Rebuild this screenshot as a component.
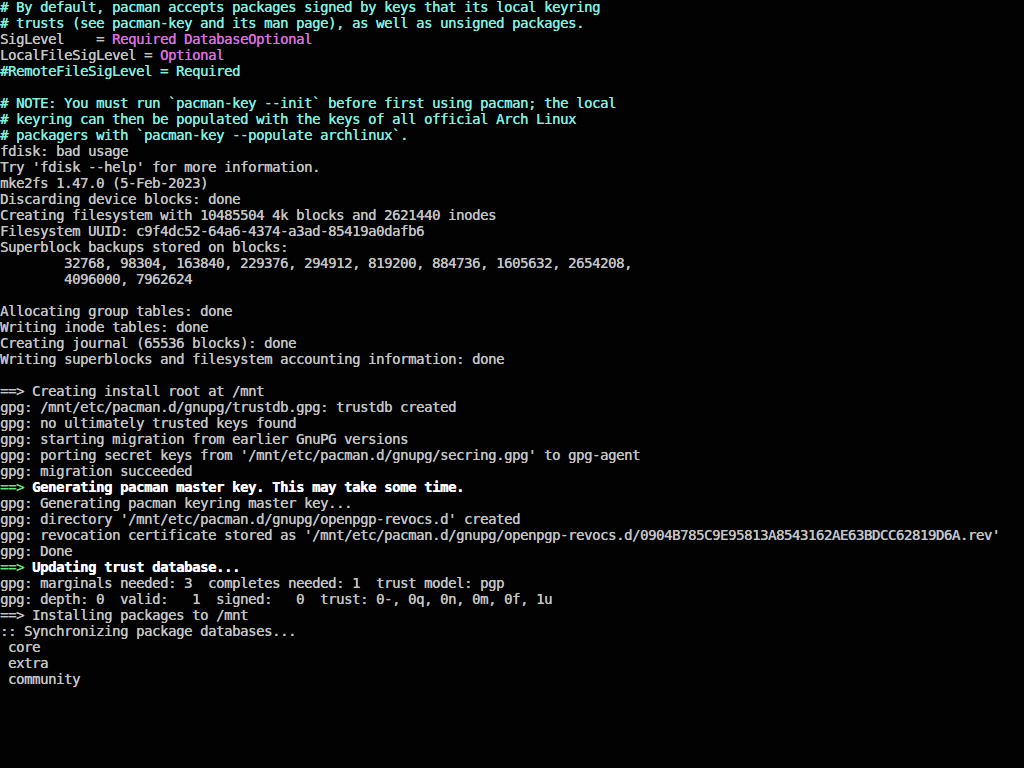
import React from "react";

const G = "text-[#c4c4c4]";
const C = "text-[#7ff0e0]";
const M = "text-[#de6ee0]";
const GR = "text-[#6fe36f]";
const W = "text-white font-bold";

const lines = [
  [[C, "# By default, pacman accepts packages signed by keys that its local keyring"]],
  [[C, "# trusts (see pacman-key and its man page), as well as unsigned packages."]],
  [[G, "SigLevel    = "], [M, "Required DatabaseOptional"]],
  [[G, "LocalFileSigLevel = "], [M, "Optional"]],
  [[C, "#RemoteFileSigLevel = Required"]],
  [],
  [[C, "# NOTE: You must run `pacman-key --init` before first using pacman; the local"]],
  [[C, "# keyring can then be populated with the keys of all official Arch Linux"]],
  [[C, "# packagers with `pacman-key --populate archlinux`."]],
  [[G, "fdisk: bad usage"]],
  [[G, "Try 'fdisk --help' for more information."]],
  [[G, "mke2fs 1.47.0 (5-Feb-2023)"]],
  [[G, "Discarding device blocks: done"]],
  [[G, "Creating filesystem with 10485504 4k blocks and 2621440 inodes"]],
  [[G, "Filesystem UUID: c9f4dc52-64a6-4374-a3ad-85419a0dafb6"]],
  [[G, "Superblock backups stored on blocks:"]],
  [[G, "        32768, 98304, 163840, 229376, 294912, 819200, 884736, 1605632, 2654208,"]],
  [[G, "        4096000, 7962624"]],
  [],
  [[G, "Allocating group tables: done"]],
  [[G, "Writing inode tables: done"]],
  [[G, "Creating journal (65536 blocks): done"]],
  [[G, "Writing superblocks and filesystem accounting information: done"]],
  [],
  [[G, "==> Creating install root at /mnt"]],
  [[G, "gpg: /mnt/etc/pacman.d/gnupg/trustdb.gpg: trustdb created"]],
  [[G, "gpg: no ultimately trusted keys found"]],
  [[G, "gpg: starting migration from earlier GnuPG versions"]],
  [[G, "gpg: porting secret keys from '/mnt/etc/pacman.d/gnupg/secring.gpg' to gpg-agent"]],
  [[G, "gpg: migration succeeded"]],
  [[GR, "==> "], [W, "Generating pacman master key. This may take some time."]],
  [[G, "gpg: Generating pacman keyring master key..."]],
  [[G, "gpg: directory '/mnt/etc/pacman.d/gnupg/openpgp-revocs.d' created"]],
  [[G, "gpg: revocation certificate stored as '/mnt/etc/pacman.d/gnupg/openpgp-revocs.d/0904B785C9E95813A8543162AE63BDCC62819D6A.rev'"]],
  [[G, "gpg: Done"]],
  [[GR, "==> "], [W, "Updating trust database..."]],
  [[G, "gpg: marginals needed: 3  completes needed: 1  trust model: pgp"]],
  [[G, "gpg: depth: 0  valid:   1  signed:   0  trust: 0-, 0q, 0n, 0m, 0f, 1u"]],
  [[G, "==> Installing packages to /mnt"]],
  [[G, ":: Synchronizing package databases..."]],
  [[G, " core"]],
  [[G, " extra"]],
  [[G, " community"]],
];

export default function App() {
  return (
    <div className="w-[1024px] h-[768px] bg-[#020202] overflow-hidden font-['DejaVu_Sans_Mono',monospace] text-[14px] tracking-[-0.43px] leading-[16px] [text-shadow:0.35px_0_0_currentColor]">
      <div className="-mt-px">
        {lines.map((segs, i) => (
          <div key={i} className="h-[16px] whitespace-pre">
            {segs.map(([cls, t], j) => (
              <span key={j} className={cls}>
                {t}
              </span>
            ))}
          </div>
        ))}
      </div>
    </div>
  );
}
